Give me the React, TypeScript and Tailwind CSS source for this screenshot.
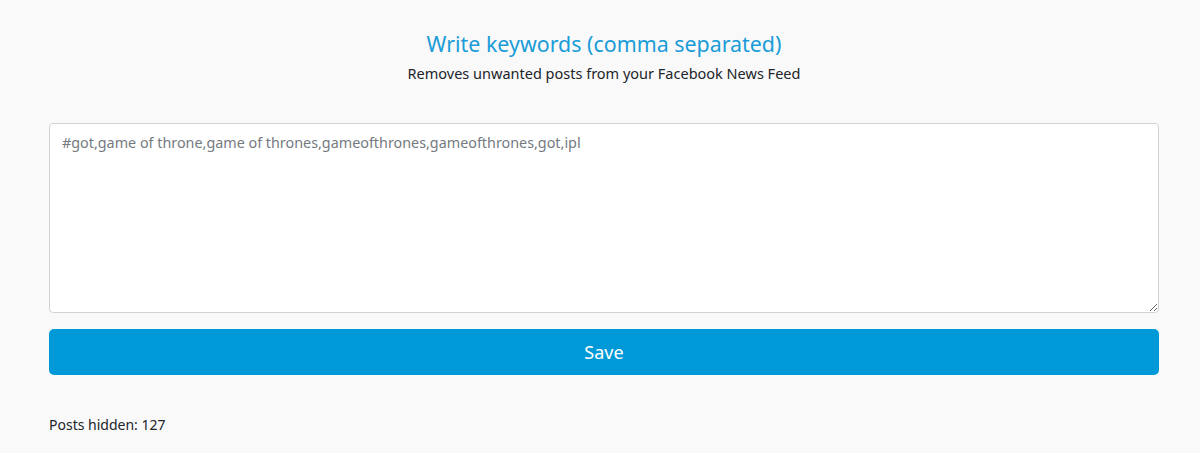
import React from "react";

export default function App() {
  return (
    <div className="min-h-[453px] w-[1200px] bg-[#f9f9f9] font-['Noto_Sans',sans-serif] text-[#212529]">
      <div className="ml-[49px] w-[1110px] pt-[30px]">
        <h1 className="text-center text-[21.4px] leading-[28px] text-[#1a9cd8]">Write keywords (comma separated)</h1>
        <p className="mt-[5px] text-center text-[14.5px] leading-[21px]">Removes unwanted posts from your Facebook News Feed</p>
        <textarea
          className="mt-[39px] block h-[190px] w-full resize-y rounded-[4px] border border-[#cfd4d9] bg-white px-[12px] py-[8px] text-[14.35px] leading-[21px] text-[#757a7f] outline-none"
          defaultValue="#got,game of throne,game of thrones,gameofthrones,gameofthrones,got,ipl"
        />
        <button className="mt-[16px] block h-[46px] w-full rounded-[5px] bg-[#0099d8] text-[18px] text-white">Save</button>
        <p className="mt-[40px] text-[14px] leading-[20px]">Posts hidden: 127</p>
      </div>
    </div>
  );
}
